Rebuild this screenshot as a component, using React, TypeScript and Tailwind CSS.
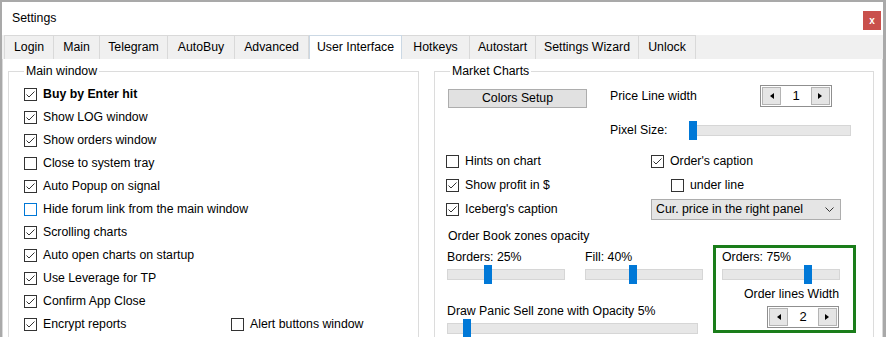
import React from "react";

const Check = ({ checked, focus }: { checked?: boolean; focus?: boolean }) => (
  <span
    className={`flex h-[13px] w-[13px] shrink-0 items-center justify-center border bg-white ${
      focus ? "border-[#0078d7]" : "border-[#333333]"
    }`}
  >
    {checked && (
      <svg width="11" height="11" viewBox="0 0 11 11">
        <polyline points="1.5,5.5 4,8 9.5,2.5" fill="none" stroke="#333333" strokeWidth="1" />
      </svg>
    )}
  </span>
);

const CheckRow = ({
  label,
  checked,
  focus,
  bold,
  className = "",
}: {
  label: string;
  checked?: boolean;
  focus?: boolean;
  bold?: boolean;
  className?: string;
}) => (
  <div className={`flex items-center gap-[6px] ${className}`}>
    <Check checked={checked} focus={focus} />
    <span className={bold ? "font-bold" : ""}>{label}</span>
  </div>
);

const Slider = ({ className, pos }: { className: string; pos: number }) => (
  <div className={`relative h-[19px] ${className}`}>
    <div className="absolute left-0 right-0 top-[4px] h-[11px] border border-[#d6d6d6] bg-[#e7e7e7]" />
    <div className="absolute top-0 h-[19px] w-[8px] bg-[#0078d7]" style={{ left: pos }} />
  </div>
);

const Arrow = ({ dir }: { dir: "l" | "r" }) => (
  <span className="flex h-[18px] w-[19px] items-center justify-center border border-[#b4b4b4] bg-[#e5e5e5]">
    <svg width="4" height="6" viewBox="0 0 4 6">
      <polygon points={dir === "l" ? "4,0 0,3 4,6" : "0,0 4,3 0,6"} fill="#000" />
    </svg>
  </span>
);

const Spinner = ({ value }: { value: string }) => (
  <div className="flex h-[22px] w-[72px] items-center justify-between border border-[#8f8f8f] bg-white px-[1px]">
    <Arrow dir="l" />
    <span className="text-[13px]">{value}</span>
    <Arrow dir="r" />
  </div>
);

const tabs = [
  { name: "Login", w: "w-[50px]" },
  { name: "Main", w: "w-[46px]" },
  { name: "Telegram", w: "w-[68px]" },
  { name: "AutoBuy", w: "w-[67px]" },
  { name: "Advanced", w: "w-[74px]" },
  { name: "User Interface", w: "w-[93px]", active: true },
  { name: "Hotkeys", w: "w-[68px]" },
  { name: "Autostart", w: "w-[66px]" },
  { name: "Settings Wizard", w: "w-[103px]" },
  { name: "Unlock", w: "w-[57px]" },
];

const App = () => {
  return (
    <div className="flex h-[337px] w-[886px] flex-col overflow-hidden border-l-2 border-r-[3px] border-t-2 border-[#a9a9a9] bg-white font-['Liberation_Sans',Arial,sans-serif] text-[12.3px] text-black">
      {/* title bar */}
      <div className="flex h-[33px] shrink-0 items-center justify-between pl-[10px] pr-[2px]">
        <span>Settings</span>
        <span className="mt-[4px] flex h-[19px] w-[18px] items-center justify-center bg-[#c9504c] text-[10px] font-bold text-white">
          x
        </span>
      </div>

      {/* tabs */}
      <div className="flex h-[24px] shrink-0 bg-[#f0f0f0] pl-[2px]">
        {tabs.map((t, i) => (
          <div
            key={t.name}
            className={`flex items-center justify-center border-r border-t ${t.w} ${
              i === 0 ? "border-l" : ""
            } ${t.active ? "border-l border-[#cbd8e4] bg-white" : "border-[#d9d9d9]"}`}
          >
            {t.name}
          </div>
        ))}
      </div>

      {/* page */}
      <div className="flex flex-1 gap-[15px] border-l border-r border-[#d9d9d9] pl-[5px] pr-[5px] pt-[5px]">
        {/* Main window */}
        <fieldset className="w-[411px] border border-[#dcdcdc] pl-[15px]">
          <legend className="px-[2px] leading-[15px]">Main window</legend>
          <div className="flex flex-col pt-[4px]">
            <CheckRow className="h-[23px]" label="Buy by Enter hit" checked bold />
            <CheckRow className="h-[23px]" label="Show LOG window" checked />
            <CheckRow className="h-[23px]" label="Show orders window" checked />
            <CheckRow className="h-[23px]" label="Close to system tray" />
            <CheckRow className="h-[23px]" label="Auto Popup on signal" checked />
            <CheckRow className="h-[23px]" label="Hide forum link from the main window" focus />
            <CheckRow className="h-[23px]" label="Scrolling charts" checked />
            <CheckRow className="h-[23px]" label="Auto open charts on startup" checked />
            <CheckRow className="h-[23px]" label="Use Leverage for TP" checked />
            <CheckRow className="h-[23px]" label="Confirm App Close" checked />
            <div className="flex h-[23px] items-center">
              <CheckRow className="w-[207px]" label="Encrypt reports" checked />
              <CheckRow label="Alert buttons window" />
            </div>
          </div>
        </fieldset>

        {/* Market Charts */}
        <fieldset className="w-[440px] border border-[#dcdcdc] pl-[12px]">
          <legend className="ml-[3px] px-[2px] leading-[15px]">Market Charts</legend>
          <div className="flex flex-col">
            <div className="mt-[6px] flex h-[23px] items-start">
              <div className="ml-[1px] mt-[4px] flex h-[19px] w-[139px] items-center justify-center border border-[#adadad] bg-[#e1e1e1]">
                Colors Setup
              </div>
              <span className="ml-[23px] w-[150px] leading-[23px]">Price Line width</span>
              <Spinner value="1" />
            </div>

            <div className="mt-[13px] flex h-[19px] items-center">
              <span className="ml-[163px] w-[79px]">Pixel Size:</span>
              <Slider className="w-[162px]" pos={0} />
            </div>

            <div className="-ml-[1px] mt-[9px] flex">
              <div className="flex w-[205px] flex-col">
                <CheckRow className="h-[24px]" label="Hints on chart" />
                <CheckRow className="h-[24px]" label="Show profit in $" checked />
                <CheckRow className="h-[24px]" label="Iceberg's caption" checked />
              </div>
              <div className="flex flex-col">
                <CheckRow className="h-[24px]" label="Order's caption" checked />
                <CheckRow className="ml-[20px] h-[24px]" label="under line" />
                <div className="flex h-[24px] items-center">
                  <div className="flex h-[21px] w-[190px] items-center justify-between border border-[#adadad] bg-[#e5e5e5] pl-[4px] pr-[6px]">
                    <span>Cur. price in the right panel</span>
                    <svg width="9" height="5" viewBox="0 0 9 5">
                      <polyline points="0.5,0.5 4.5,4.5 8.5,0.5" fill="none" stroke="#333" strokeWidth="1" />
                    </svg>
                  </div>
                </div>
              </div>
            </div>

            <div className="ml-[1px] mt-[7px] h-[16px] leading-[16px]">Order Book zones opacity</div>

            <div className="mt-[1px] flex items-start">
              <div className="flex w-[266px] flex-col pt-[4px]">
                <div className="flex gap-[20px]">
                  <div className="flex w-[118px] flex-col">
                    <span className="h-[16px] leading-[16px]">Borders: 25%</span>
                    <Slider className="w-[118px]" pos={37} />
                  </div>
                  <div className="flex w-[118px] flex-col">
                    <span className="h-[16px] leading-[16px]">Fill: 40%</span>
                    <Slider className="w-[118px]" pos={44} />
                  </div>
                </div>
                <span className="mt-[19px] h-[16px] leading-[16px]">Draw Panic Sell zone with Opacity 5%</span>
                <Slider className="w-[251px]" pos={16} />
              </div>

              <div className="flex h-[88px] w-[143px] flex-col border-[3px] border-[#1a7d1a] pl-[6px] pr-[14px] pt-[1px]">
                <span className="h-[16px] leading-[16px]">Orders: 75%</span>
                <Slider className="w-[118px]" pos={82} />
                <span className="mt-[2px] h-[16px] self-end leading-[16px]">Order lines Width</span>
                <div className="mt-[4px] self-end">
                  <Spinner value="2" />
                </div>
              </div>
            </div>
          </div>
        </fieldset>
      </div>
    </div>
  );
};

export default App;
